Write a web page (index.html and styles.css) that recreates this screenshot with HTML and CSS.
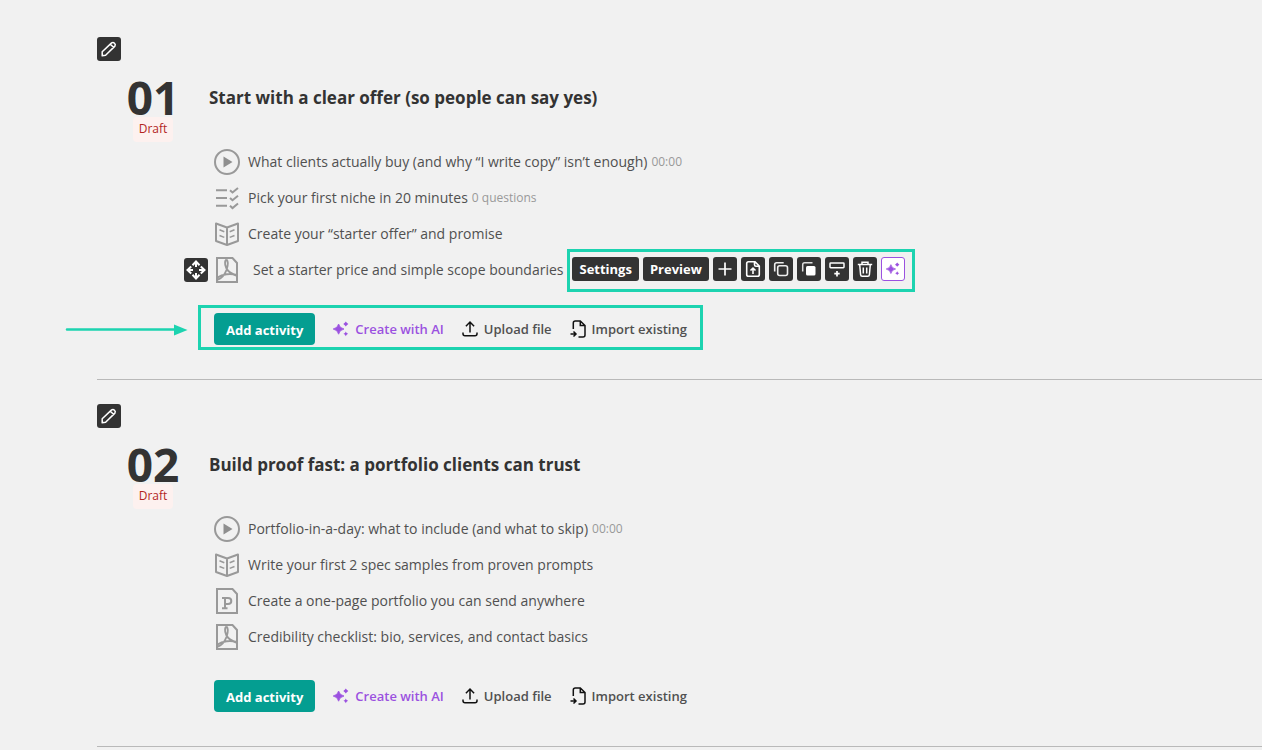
FILE: index.html
```html
<!DOCTYPE html>
<html lang="en">
<head>
<meta charset="utf-8">
<title>Course contents</title>
<link rel="stylesheet" href="styles.css">
</head>
<body>
<svg class="sprite" aria-hidden="true">
  <symbol id="pencil" viewBox="0 0 24 24"><path d="M5.2 18.8v-4L14.6 5.9q1.5-1 2.9.3t.4 2.9L8.6 18.3zM13.4 7.2l3.3 3.3" fill="none" stroke="#fff" stroke-width="1.5" stroke-linejoin="round"/></symbol>
  <symbol id="video" viewBox="0 0 26 26"><circle cx="13" cy="13" r="12" fill="none" stroke="#999" stroke-width="2"/><path d="M9.500 7.500v11l9-5.500z" fill="#8f8f8f"/></symbol>
  <symbol id="quiz" viewBox="0 0 26 26"><path d="M2 5.200h11M2 13h11M2 20.800h11M16 5.200l2.500 2.300L24 3M16 13l2.500 2.300L24 10.800M16 20.800l2.500 2.300L24 18.600" fill="none" stroke="#999" stroke-width="2"/></symbol>
  <symbol id="book" viewBox="0 0 26 26"><path d="M2 2.500l11 4L24 2.500V20l-11 4-11-4zM13 7v17" fill="none" stroke="#999" stroke-width="2" stroke-linejoin="round"/><path d="M5.500 8.800l4.800 1.900M5.500 14.500l4.800 1.900M20.500 8.800l-4.800 1.900M20.500 14.500l-4.800 1.900" stroke="#999" stroke-width="1.500"/></symbol>
  <symbol id="pdf" viewBox="0 0 26 26"><path d="M3 1h15.500l4.500 5v19H3z" fill="none" stroke="#999" stroke-width="2"/><path d="M12.500 2.500c-2 1.500-1.500 5.500-.2 8.500 2 4.500 5.500 6 10 7.500M12.500 2.500c2 2 1.200 7 0 10.500C10.500 18 7.500 21.500 4 22.500M3.500 20.500c5-3.500 13-4.500 19-2.500" fill="none" stroke="#999" stroke-width="1.900"/></symbol>
  <symbol id="presentation" viewBox="0 0 26 26"><path d="M3 1h15.500l4.500 5v19H3z" fill="none" stroke="#999" stroke-width="2"/><path d="M8 10h6q3.300 0 3.300 3t-3.300 3h-3M11 10v10.200M8 20.200h5.500" fill="none" stroke="#999" stroke-width="2"/></symbol>
  <symbol id="move" viewBox="0 0 24 24"><path d="M12 5v4M12 15v4M5 12h4M15 12h4" stroke="#fff" stroke-width="2"/><path d="M8.500 7.200L12 3.500l3.500 3.700M8.500 16.800l3.500 3.700 3.500-3.700M7.200 8.500L3.500 12l3.700 3.500M16.800 8.500l3.700 3.500-3.700 3.500" fill="none" stroke="#fff" stroke-width="2"/></symbol>
  <symbol id="plus" viewBox="0 0 24 24"><path d="M12 5.500v13M5.500 12h13" stroke="#fff" stroke-width="1.700"/></symbol>
  <symbol id="file-up" viewBox="0 0 24 24"><path d="M13.800 4.700H7.500Q5.700 4.700 5.700 6.500v11q0 1.800 1.800 1.800h9q1.800 0 1.800-1.800V9zM13.500 4.700v3q0 1.500 1.500 1.500h3.300M12 17v-5.500M9.500 13.500L12 11l2.500 2.500" fill="none" stroke="#fff" stroke-width="1.600" stroke-linejoin="round"/></symbol>
  <symbol id="copy" viewBox="0 0 24 24"><rect x="8.700" y="8.700" width="9.800" height="9.800" rx="2" fill="none" stroke="#eee" stroke-width="1.600"/><path d="M5.700 14.500V7.700q0-2 2-2h7" fill="none" stroke="#eee" stroke-width="1.600"/></symbol>
  <symbol id="copy-solid" viewBox="0 0 24 24"><rect x="9" y="9" width="9.500" height="9.500" rx="1.500" fill="#fff"/><path d="M5.700 14.500V7.700q0-2 2-2h7.800" fill="none" stroke="#ddd" stroke-width="1.500"/></symbol>
  <symbol id="insert-below" viewBox="0 0 24 24"><rect x="5" y="6" width="14" height="4.800" rx=".7" fill="none" stroke="#fff" stroke-width="1.500"/><path d="M12 14v5.500M9.300 16.700h5.400" stroke="#fff" stroke-width="1.700"/></symbol>
  <symbol id="trash" viewBox="0 0 24 24"><path d="M4.800 7.500h14.400M9 7.300V5.200h6v2.100M6.700 7.500l.9 10.200q.1 1.500 1.600 1.500h5.600q1.500 0 1.600-1.500l.9-10.200M10.300 10.500v6M13.700 10.500v6" fill="none" stroke="#fff" stroke-width="1.500"/></symbol>
  <symbol id="sparkles" viewBox="0 0 16 16"><path d="M5.600 3Q6.500 7.100 11 8 6.500 8.900 5.600 13.200 4.700 8.900.2 8 4.700 7.100 5.600 3z" fill="#9b51e0" stroke="#9b51e0" stroke-width=".8"/><path d="M12.800.5l1 1.300 1.500 1.200-1.500 1.200-1 1.300-1-1.300L10.300 3l1.500-1.200zM12.800 10.500l.8 1.400 1.500.9-1.500.9-.8 1.500-.8-1.500-1.500-.9 1.500-.9z" fill="#9b51e0"/></symbol>
  <symbol id="upload" viewBox="0 0 16 16"><path d="M8 11.500V1.500M3.900 5.200L8 1l4.100 4.200M1 11.500v1.200q0 2 2 2h10q2 0 2-2v-1.200" fill="none" stroke="#111" stroke-width="1.500"/></symbol>
  <symbol id="import" viewBox="0 0 16 18"><path d="M3.300 9V3q0-2 2-2h5l4.700 4.500V15q0 2-2 2H8.500M10.300 1.500V5.500H15M.5 14h5M3.500 11.500L6 14l-2.500 2.500" fill="none" stroke="#111" stroke-width="1.500"/></symbol>
</svg>

<main class="course">
  <section class="module">
    <button class="tool" type="button" aria-label="Edit module 1"><svg><use href="#pencil"/></svg></button>
    <div class="module-body">
      <div class="marker"><span class="number">01</span><span class="status">Draft</span></div>
      <div class="content">
        <h2 class="title">Start with a clear offer (so people can say yes)</h2>
        <ul class="activities">
          <li class="activity"><svg class="kind"><use href="#video"/></svg><a class="name" href="#">What clients actually buy (and why “I write copy” isn’t enough)</a><span class="meta">00:00</span></li>
          <li class="activity"><svg class="kind"><use href="#quiz"/></svg><a class="name" href="#">Pick your first niche in 20 minutes</a><span class="meta">0 questions</span></li>
          <li class="activity"><svg class="kind"><use href="#book"/></svg><a class="name" href="#">Create your “starter offer” and promise</a></li>
          <li class="activity active">
            <button class="tool handle" type="button" aria-label="Move activity"><svg><use href="#move"/></svg></button>
            <svg class="kind"><use href="#pdf"/></svg><a class="name" href="#">Set a starter price and simple scope boundaries</a>
            <div class="toolbar">
              <button class="tool text" type="button">Settings</button>
              <button class="tool text" type="button">Preview</button>
              <button class="tool" type="button" aria-label="Add"><svg><use href="#plus"/></svg></button>
              <button class="tool" type="button" aria-label="Upload"><svg><use href="#file-up"/></svg></button>
              <button class="tool" type="button" aria-label="Copy"><svg><use href="#copy"/></svg></button>
              <button class="tool" type="button" aria-label="Duplicate"><svg><use href="#copy-solid"/></svg></button>
              <button class="tool" type="button" aria-label="Insert below"><svg><use href="#insert-below"/></svg></button>
              <button class="tool" type="button" aria-label="Delete"><svg><use href="#trash"/></svg></button>
              <button class="tool ai" type="button" aria-label="AI tools"><svg><use href="#sparkles"/></svg></button>
            </div>
          </li>
        </ul>
        <div class="actions highlighted">
          <svg class="arrow" viewBox="0 0 124 12" aria-hidden="true"><path d="M3 5.500h108" stroke="#1dd3b0" stroke-width="2.500" stroke-linecap="round"/><path d="M110 .5v11l13.500-5.500z" fill="#1dd3b0"/></svg>
          <button class="add" type="button">Add activity</button>
          <button class="link create" type="button"><svg><use href="#sparkles"/></svg>Create with AI</button>
          <button class="link" type="button"><svg><use href="#upload"/></svg>Upload file</button>
          <button class="link" type="button"><svg><use href="#import"/></svg>Import existing</button>
        </div>
      </div>
    </div>
  </section>

  <section class="module">
    <button class="tool" type="button" aria-label="Edit module 2"><svg><use href="#pencil"/></svg></button>
    <div class="module-body">
      <div class="marker"><span class="number">02</span><span class="status">Draft</span></div>
      <div class="content">
        <h2 class="title">Build proof fast: a portfolio clients can trust</h2>
        <ul class="activities">
          <li class="activity"><svg class="kind"><use href="#video"/></svg><a class="name" href="#">Portfolio-in-a-day: what to include (and what to skip)</a><span class="meta">00:00</span></li>
          <li class="activity"><svg class="kind"><use href="#book"/></svg><a class="name" href="#">Write your first 2 spec samples from proven prompts</a></li>
          <li class="activity"><svg class="kind"><use href="#presentation"/></svg><a class="name" href="#">Create a one-page portfolio you can send anywhere</a></li>
          <li class="activity"><svg class="kind"><use href="#pdf"/></svg><a class="name" href="#">Credibility checklist: bio, services, and contact basics</a></li>
        </ul>
        <div class="actions">
          <button class="add" type="button">Add activity</button>
          <button class="link create" type="button"><svg><use href="#sparkles"/></svg>Create with AI</button>
          <button class="link" type="button"><svg><use href="#upload"/></svg>Upload file</button>
          <button class="link" type="button"><svg><use href="#import"/></svg>Import existing</button>
        </div>
      </div>
    </div>
  </section>
</main>
</body>
</html>
```
FILE: styles.css
```css
* { box-sizing: border-box; }

body {
  margin: 0;
  background: #f1f1f1;
  color: #505050;
  font: 14px/20px "Open Sans", "Noto Sans", sans-serif;
}

button {
  border: 0;
  margin: 0;
  padding: 0;
  font: inherit;
  cursor: pointer;
}

.sprite { display: none; }

.course { padding: 13px 0 0 97px; }

.module {
  padding: 24px 0 34px;
  border-bottom: 1px solid #b9b9b9;
}

.tool {
  display: flex;
  align-items: center;
  justify-content: center;
  flex: none;
  width: 24px;
  height: 24px;
  border-radius: 3px;
  background: #333;
  color: #fff;
}

.tool svg { width: 24px; height: 24px; }

.tool.text {
  width: auto;
  padding: 0 7px;
  font-size: 13px;
  font-weight: 700;
}

.tool.ai {
  border: 1px solid #9b51e0;
  background: #fff;
}

.tool.ai svg { width: 14px; height: 14px; }

.module-body {
  display: flex;
  margin-top: 18px;
}

.marker {
  display: flex;
  flex-direction: column;
  align-items: center;
  width: 112px;
  flex: none;
}

.number {
  color: #333;
  font-size: 46px;
  font-weight: 700;
  line-height: 36px;
}

.status {
  margin-top: 2px;
  padding: 0 6px 1px;
  border-radius: 4px;
  background: #fdf1ef;
  color: #b3261e;
  font-size: 12px;
  line-height: 24px;
}

.content { flex: 1; }

.title {
  margin: 0;
  color: #333;
  font-size: 17px;
  font-weight: 700;
  line-height: 38px;
}

.activities {
  margin: 27px 0 0;
  padding: 0 0 0 5px;
  list-style: none;
}

.activity {
  position: relative;
  display: flex;
  align-items: center;
  height: 36px;
  white-space: nowrap;
}

.kind {
  width: 26px;
  height: 26px;
  margin-right: 8px;
}

.active .kind { margin-right: 13px; }

.name {
  color: inherit;
  text-decoration: none;
}

.meta {
  margin-left: 4px;
  color: #999;
  font-size: 12px;
}

.handle {
  position: absolute;
  left: -30px;
}

.toolbar {
  position: relative;
  display: flex;
  gap: 4px;
  margin: 0 0 2px 9px;
}

.toolbar::after,
.highlighted::after {
  content: "";
  position: absolute;
  border: 3px solid #1dd3b0;
  pointer-events: none;
}

.toolbar::after { inset: -8px -10px -11px -5px; }

.actions {
  position: relative;
  display: flex;
  align-items: center;
  gap: 18px;
  width: max-content;
  margin: 25px 0 0 5px;
}

.highlighted::after { inset: -8px -16px -5px -16px; }

.arrow {
  position: absolute;
  top: 11px;
  right: calc(100% + 26px);
  width: 124px;
  height: 12px;
}

.add {
  height: 32px;
  padding: 1px 12px 0;
  border-radius: 4px;
  background: #049e91;
  color: #fff;
  font-size: 13px;
  font-weight: 700;
}

.link {
  display: flex;
  align-items: center;
  gap: 6px;
  background: none;
  color: #505050;
  font-size: 13px;
  font-weight: 600;
}

.link svg { width: 16px; height: 18px; }

.create { color: #9b51e0; }
```
